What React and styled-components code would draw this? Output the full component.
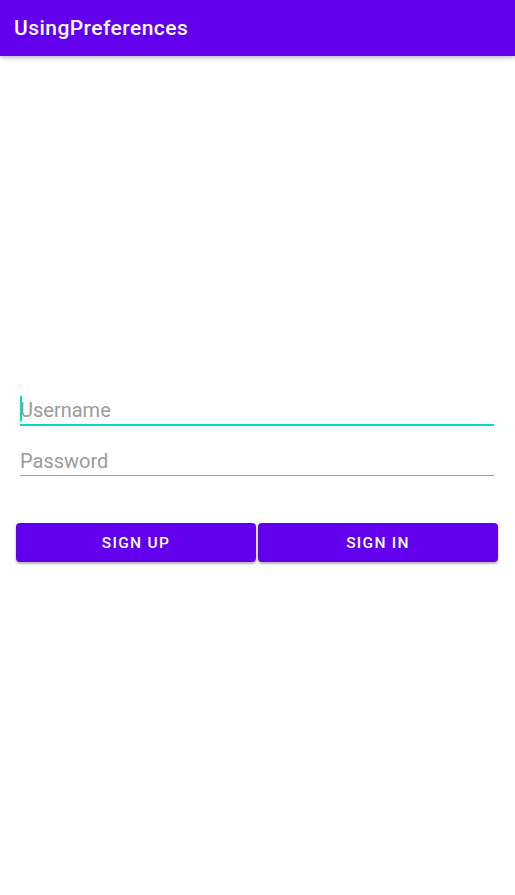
import React from 'react'
import styled, { createGlobalStyle } from 'styled-components'

const GlobalStyle = createGlobalStyle`
  body {
    margin: 0;
    background: #ffffff;
    font-family: Roboto, "Noto Sans", sans-serif;
  }
`

export default function App() {
  return (
    <>
      <GlobalStyle />
      <Screen>
        <AppBar>
          <Title>UsingPreferences</Title>
        </AppBar>
        <Content>
          <Form>
            <Field focused>
              <Cursor />
              <Input placeholder="Username" />
            </Field>
            <Field>
              <Input placeholder="Password" type="password" />
            </Field>
          </Form>
          <ButtonRow>
            <Button>Sign up</Button>
            <Button>Sign in</Button>
          </ButtonRow>
        </Content>
      </Screen>
    </>
  )
}

const Screen = styled.div`
  width: 515px;
  height: 895px;
  display: flex;
  flex-direction: column;
  background: #ffffff;
`

const AppBar = styled.header`
  height: 56px;
  flex-shrink: 0;
  background: #6200ee;
  display: flex;
  align-items: center;
  padding: 0 0 1px 14px;
  box-sizing: border-box;
  box-shadow: 0 2px 4px rgba(0, 0, 0, 0.25);
  position: relative;
  z-index: 1;
`

const Title = styled.h1`
  margin: 0;
  color: #ffffff;
  font-size: 21px;
  font-weight: 500;
  letter-spacing: 0.45px;
`

const Content = styled.main`
  padding: 340px 17px 0 16px;
  display: flex;
  flex-direction: column;
`

const Form = styled.div`
  display: flex;
  flex-direction: column;
  gap: 21px;
  padding: 0 4px;
`

const Field = styled.div`
  position: relative;
  height: 28px;
  border-bottom: ${(p) => (p.focused ? '2px solid #03dac5' : '1px solid #9e9e9e')};
  margin-bottom: ${(p) => (p.focused ? '0' : '1px')};
`

const Cursor = styled.span`
  position: absolute;
  left: 0;
  top: 0;
  width: 2px;
  height: 25px;
  background: #03dac5;
`

const Input = styled.input`
  width: 100%;
  height: 100%;
  border: none;
  outline: none;
  padding: 0;
  background: transparent;
  font-family: Roboto, sans-serif;
  font-size: 20px;
  color: #000;
  &::placeholder {
    color: #9b9b9b;
  }
`

const ButtonRow = styled.div`
  margin-top: 46px;
  display: flex;
  gap: 2px;
`

const Button = styled.button`
  flex: 1;
  height: 39px;
  border: none;
  border-radius: 4px;
  background: #6200ee;
  color: #ffffff;
  font-family: Roboto, sans-serif;
  font-weight: 500;
  font-size: 15.5px;
  letter-spacing: 1.3px;
  text-transform: uppercase;
  box-shadow: 0 2px 2px rgba(0, 0, 0, 0.22), 0 1px 4px rgba(0, 0, 0, 0.12);
`
